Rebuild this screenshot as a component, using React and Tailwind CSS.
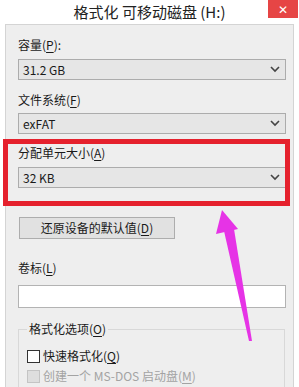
import React from "react";

const font = { fontFamily: '"Noto Sans CJK SC", "Noto Sans", sans-serif' };

function Key({ children }) {
    return <span className="underline underline-offset-2">{children}</span>;
}

function Chevron() {
    return (
        <svg width="10" height="7" viewBox="0 0 10 7" className="shrink-0">
            <polyline points="1,1 5,5 9,1" fill="none" stroke="#444" strokeWidth="1.6" />
        </svg>
    );
}

function Combo({ value }) {
    return (
        <div className="flex items-center justify-between w-[268px] h-[21px] border border-[#acacac] bg-[#e6e6e6] pl-[4px] pr-[5px] text-[12px] leading-[16px] text-[#1a1a1a]">
            <span>{value}</span>
            <Chevron />
        </div>
    );
}

export default function App() {
    return (
        <div className="relative w-[299px] h-[387px] overflow-hidden bg-white text-[#1a1a1a]" style={font}>
            {/* title bar */}
            <div className="relative h-[24px] flex items-center justify-center">
                <span className="text-[15px] leading-[20px] text-[#222]">格式化 可移动磁盘 (H:)</span>
                <div className="absolute right-[1px] top-0 w-[30px] h-[18px] bg-[#e64545] flex items-center justify-center text-white text-[12px] leading-none">
                    ✕
                </div>
            </div>

            {/* dialog body */}
            <div className="ml-[5px] w-[289px] h-[400px] border border-[#d4d4d4] bg-[#eeeeee] pl-[12px] pr-[6px] pt-[12px] text-[12px] leading-[16px]">
                <div>容量(<Key>P</Key>):</div>
                <div className="mt-[6px]"><Combo value="31.2 GB" /></div>

                <div className="mt-[12px]">文件系统(<Key>F</Key>)</div>
                <div className="mt-[5px]"><Combo value="exFAT" /></div>

                <div className="mt-[11px]">分配单元大小(<Key>A</Key>)</div>
                <div className="mt-[6px]"><Combo value="32 KB" /></div>

                <button className="mt-[29px] ml-[1px] w-[156px] h-[22px] border border-[#adadad] bg-[#e1e1e1] text-[12px] leading-[16px] text-[#1a1a1a] flex items-center justify-center">
                    还原设备的默认值(<Key>D</Key>)
                </button>

                <div className="mt-[21px]">卷标(<Key>L</Key>)</div>
                <div className="mt-[9px] w-[268px] h-[23px] border border-[#b3b3b3] bg-white"></div>

                <fieldset className="mt-[13px] w-[267px] border border-[#d8d8d8] px-[8px] pb-[10px]">
                    <legend className="px-[2px]">格式化选项(<Key>O</Key>)</legend>
                    <div className="mt-[11px] flex items-center gap-[3px]">
                        <span className="w-[13px] h-[13px] border border-[#333] bg-white"></span>
                        <span>快速格式化(<Key>Q</Key>)</span>
                    </div>
                    <div className="mt-[4px] flex items-center gap-[3px] text-[#a3a3a3]">
                        <span className="w-[13px] h-[13px] border border-[#c4c4c4] bg-[#dedede]"></span>
                        <span>创建一个 MS-DOS 启动盘(<Key>M</Key>)</span>
                    </div>
                </fieldset>
            </div>

            {/* annotation: red highlight box */}
            <div className="absolute left-[3px] top-[139px] w-[287px] h-[67px] border-[5px] border-[#e5212d]"></div>

            {/* annotation: arrow */}
            <svg className="absolute left-0 top-0 pointer-events-none" width="299" height="387">
                <polygon points="222,210 216,234 238,229" fill="#e633e6" />
                <polygon points="224,231 234,229 252,341 249,341" fill="#e633e6" />
            </svg>
        </div>
    );
}
